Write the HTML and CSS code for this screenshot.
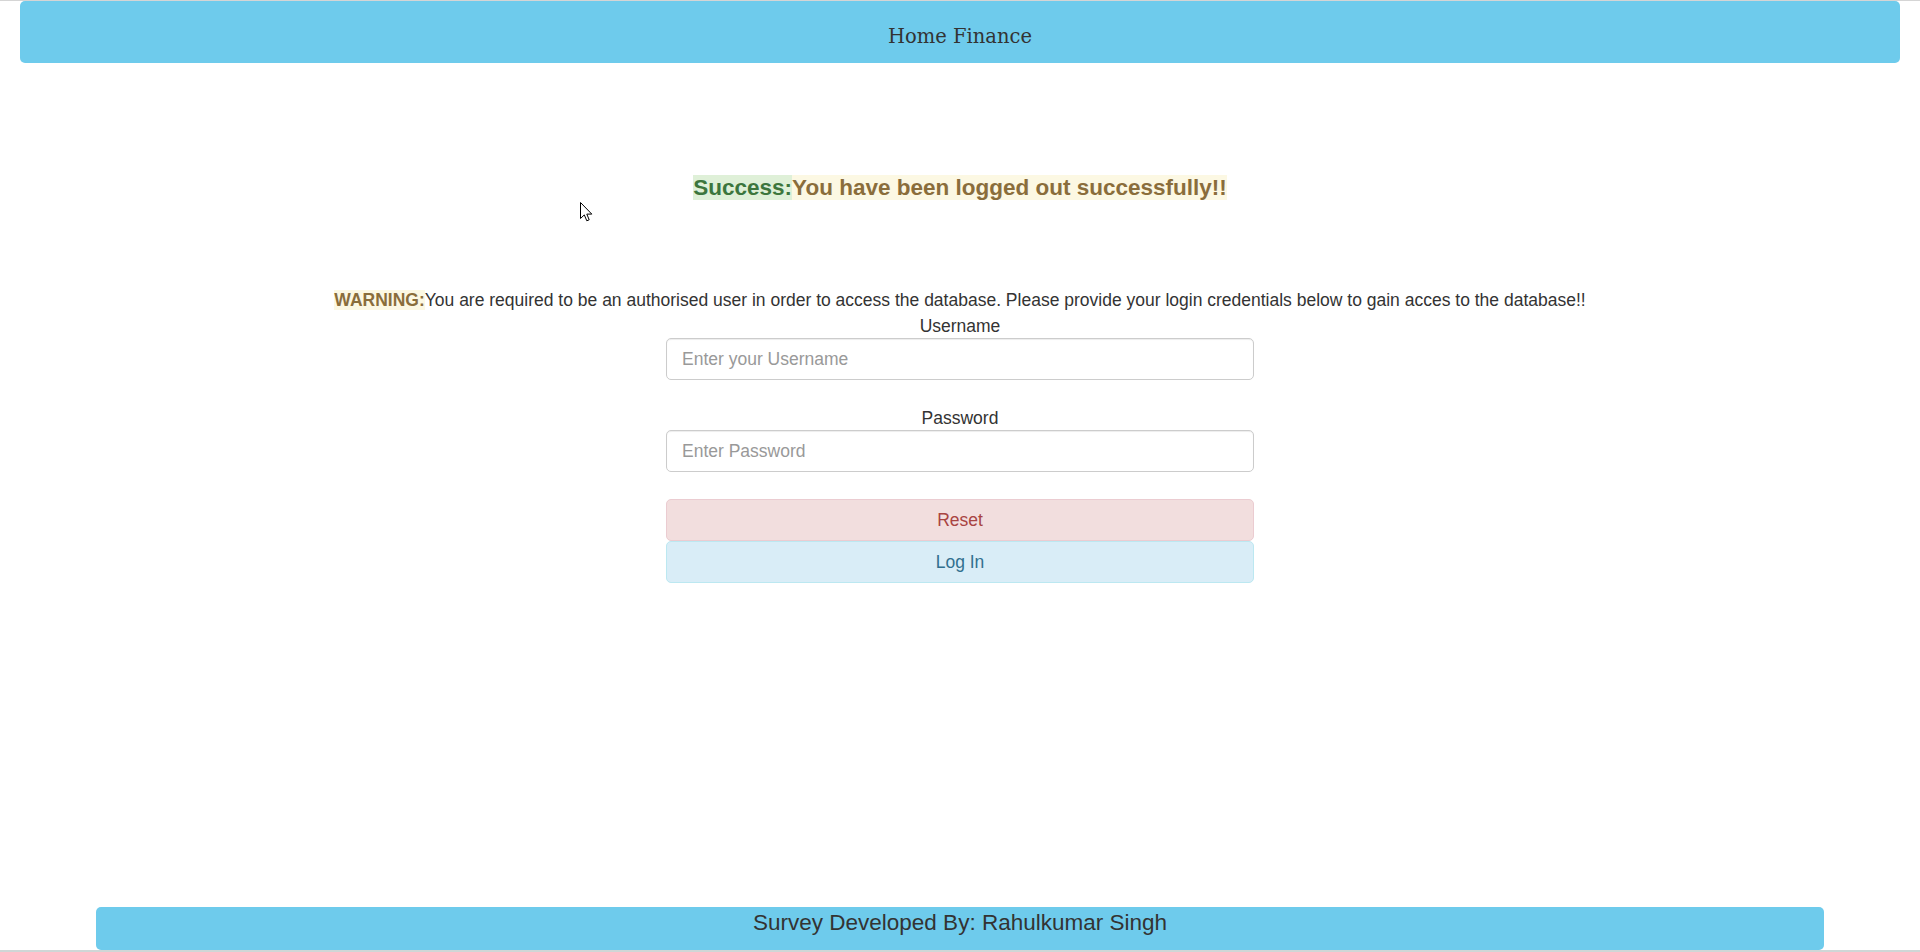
FILE: index.html
```html
<!DOCTYPE html>
<html lang="en">
<head>
<meta charset="utf-8">
<title>Home Finance</title>
<link rel="stylesheet" href="styles.css">
</head>
<body>
<div class="page">
  <header class="topbar">
    <span class="brand">Home Finance</span>
  </header>
  <main class="content">
    <h4 class="status"><span class="ok">Success:</span><span class="msg">You have been logged out successfully!!</span></h4>
    <p class="warning"><span class="warn-tag">WARNING:</span>You are required to be an authorised user in order to access the database. Please provide your login credentials below to gain acces to the database!!</p>
    <form class="login">
      <label class="lbl lbl-user" for="u">Username</label>
      <input class="field" id="u" type="text" placeholder="Enter your Username">
      <label class="lbl lbl-pass" for="p">Password</label>
      <input class="field" id="p" type="password" placeholder="Enter Password">
      <button class="btn btn-reset" type="button">Reset</button>
      <button class="btn btn-login" type="button">Log In</button>
    </form>
    <svg class="cursor" width="13" height="21" viewBox="0 0 13 21"><path d="M0.5 0.5 L0.5 16.5 L4.3 12.9 L6.8 18.8 L9.2 17.8 L6.8 12.1 L11.8 12.1 Z" fill="#fff" stroke="#000" stroke-width="1" stroke-linejoin="miter"/></svg>
  </main>
  <footer class="foot">
    <div class="foot-bar">Survey Developed By: Rahulkumar Singh</div>
  </footer>
  <div class="strip"></div>
</div>
</body>
</html>
```
FILE: styles.css
```css
* { box-sizing: border-box; }
html, body { margin: 0; padding: 0; }
body {
  background: #fff;
  font-family: "Liberation Sans", Arial, sans-serif;
  font-size: 17.5px;
  color: #333;
}
.page {
  height: 952px;
  display: flex;
  flex-direction: column;
  border-top: 1px solid #d5d5d5;
}
.topbar {
  margin: 0 20px;
  height: 62px;
  flex: none;
  background: #6ecbec;
  border-radius: 5px;
  padding-top: 9px;
  text-align: center;
}
.brand {
  font-family: "DejaVu Serif", Georgia, serif;
  font-size: 19.5px;
  line-height: 54px;
  color: #333;
}
.content {
  flex: 1;
  position: relative;
  display: flex;
  flex-direction: column;
  align-items: center;
}
.status {
  margin: 112px 0 0;
  font-size: 22.5px;
  line-height: 25px;
  font-weight: bold;
}
.ok { background: #dff0d8; color: #3c763d; }
.msg { background: #fcf8e3; color: #8a6d3b; }
.warning {
  margin: 88px 0 0;
  line-height: 25px;
  text-align: center;
}
.warn-tag { background: #fcf8e3; color: #8a6d3b; font-weight: bold; }
.login {
  width: 588px;
  display: flex;
  flex-direction: column;
  align-items: stretch;
}
.lbl {
  display: block;
  text-align: center;
  line-height: 24px;
}
.lbl-user { margin-top: 1px; }
.lbl-pass { margin-top: 26px; }
.field {
  display: block;
  height: 42px;
  margin-top: 0;
  padding: 0 15px;
  font-family: "Liberation Sans", Arial, sans-serif;
  font-size: 17.5px;
  color: #555;
  border: 1px solid #ccc;
  border-radius: 5px;
  box-shadow: inset 0 1px 1px rgba(0,0,0,.075);
  background: #fff;
}
.field::placeholder { color: #999; }
.btn {
  display: block;
  height: 42px;
  font-family: "Liberation Sans", Arial, sans-serif;
  font-size: 17.5px;
  border-radius: 5px;
  border: 1px solid;
  padding: 0;
}
.btn-reset {
  margin-top: 27px;
  background: #f2dede;
  color: #a94442;
  border-color: #ebccd1;
}
.btn-login {
  background: #d9edf7;
  color: #31708f;
  border-color: #bce8f1;
}
.cursor {
  position: absolute;
  left: 580px;
  top: 139px;
}
.foot {
  flex: none;
  padding: 0 96px;
}
.foot-bar {
  height: 43px;
  padding-top: 3px;
  background: #6ecbec;
  border-radius: 5px;
  text-align: center;
  font-size: 22.5px;
  line-height: 25px;
  color: #333;
}
.strip {
  flex: none;
  height: 2px;
  background: #cfd6d6;
}
```
